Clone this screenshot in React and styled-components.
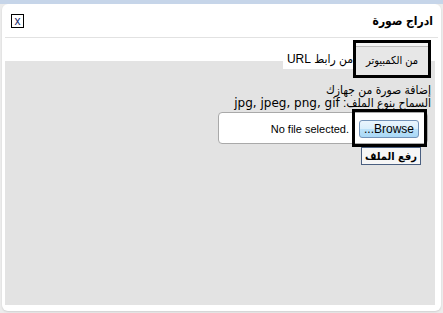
import React from 'react'
import styled, { createGlobalStyle } from 'styled-components'

const GlobalStyle = createGlobalStyle`
  html, body {
    margin: 0;
    padding: 0;
    background: #ececec;
  }
  body {
    font-family: "Liberation Sans", "DejaVu Sans Condensed", "DejaVu Sans", sans-serif;
    font-size: 12px;
    color: #000;
  }
`

const App = () => {
    return (
        <>
            <GlobalStyle />
            <Page>
                <Dialog>
                    <Header>
                        <Title>ادراج صورة</Title>
                        <Close>x</Close>
                    </Header>
                    <Body>
                        <Tabs>
                            <Tab $active>من الكمبيوتر</Tab>
                            <Tab>من رابط URL</Tab>
                        </Tabs>
                        <Panel>
                            <Line>إضافة صورة من جهازك</Line>
                            <Line>السماح بنوع الملف: <Ext>jpg, jpeg, png, gif</Ext></Line>
                            <FileBox>
                                <BrowseButton>Browse...</BrowseButton>
                                <FileName>No file selected.</FileName>
                                <Highlight />
                            </FileBox>
                            <UploadButton>رفع الملف</UploadButton>
                        </Panel>
                    </Body>
                </Dialog>
            </Page>
        </>
    )
}

export default App

const Page = styled.div`
    width: 443px;
    height: 313px;
    box-sizing: border-box;
    border-top: 4px solid #c6d5e9;
    padding-left: 2px;
    overflow: hidden;
`
const Dialog = styled.div`
    width: 439px;
    height: 307px;
    background: #fff;
    border-radius: 6px;
    box-shadow: 0 1px 2px rgba(0,0,0,0.12);
    display: flex;
    flex-direction: column;
`
const Header = styled.div`
    direction: rtl;
    height: 34px;
    box-sizing: border-box;
    display: flex;
    align-items: center;
    justify-content: space-between;
    padding: 0 5px 0 6px;
    margin: 0 3px;
    border-bottom: 1px solid #e2e2e2;
`
const Title = styled.div`
    font-family: "DejaVu Sans Condensed", "DejaVu Sans", sans-serif;
    font-weight: bold;
    font-size: 12px;
    margin-top: 1px;
`
const Close = styled.div`
    width: 13px;
    height: 14px;
    box-sizing: border-box;
    border: 1px solid #000;
    display: flex;
    align-items: center;
    justify-content: center;
    font-size: 12px;
    line-height: 1;
    color: #1a2a6a;
    margin-top: 1px;
`
const Body = styled.div`
    flex: 1;
    display: flex;
    flex-direction: column;
    padding: 2px 6px 6px 3px;
`
const Tabs = styled.div`
    direction: rtl;
    display: flex;
    align-items: flex-start;
    padding-right: 4px;
    margin-bottom: -17px;
    position: relative;
    z-index: 1;
`
const Tab = styled.div`
    white-space: nowrap;
    box-sizing: border-box;
    display: flex;
    align-items: center;
    justify-content: center;
    ${({ $active }) => $active ? `
        width: 78px;
        height: 38px;
        border: 3px solid #000;
        padding-top: 2px;
        font-size: 11px;
        background: linear-gradient(to bottom, #f4f4f4 0, #f4f4f4 3px, #bdbdbd 3px, #bdbdbd 4px, #e7e7e7 4px);
    ` : `
        width: 70px;
        height: 20px;
        margin-top: 9px;
        padding-left: 4px;
        background: #fff;
        font-size: 12px;
    `}
`
const Panel = styled.div`
    flex: 1;
    background: #e3e3e3;
    direction: rtl;
    padding: 23px 4px 0 0;
    display: flex;
    flex-direction: column;
    align-items: flex-start;
`
const Line = styled.div`
    font-size: 12px;
    line-height: 13px;
    white-space: nowrap;
`
const Ext = styled.span`
    font-family: "DejaVu Sans", sans-serif;
    font-size: 12px;
`
const FileBox = styled.div`
    position: relative;
    width: 210px;
    height: 32px;
    box-sizing: border-box;
    margin: 2px 3px 0 0;
    background: #fff;
    border: 1px solid #a9a9a9;
    border-radius: 4px;
    display: flex;
    align-items: center;
    padding-right: 8px;
    gap: 10px;
`
const BrowseButton = styled.div`
    width: 60px;
    height: 18px;
    box-sizing: border-box;
    border: 1px solid #7393b8;
    border-radius: 3px;
    background: linear-gradient(to bottom, #eaf5fd 0%, #d9effc 50%, #bde2f9 51%, #a9d8f6 100%);
    display: flex;
    align-items: center;
    justify-content: center;
    font-size: 12px;
    margin-top: 2px;
`
const FileName = styled.div`
    direction: ltr;
    font-size: 11px;
    margin-top: 2px;
`
const Highlight = styled.div`
    position: absolute;
    right: 0;
    top: -4px;
    width: 75px;
    height: 38px;
    box-sizing: border-box;
    border: 3px solid #000;
`
const UploadButton = styled.div`
    width: 60px;
    height: 18px;
    box-sizing: border-box;
    margin: 3px 10px 0 0;
    border: 1px solid #4a5f80;
    background: #f6f6f6;
    font-family: "DejaVu Sans Condensed", "DejaVu Sans", sans-serif;
    font-weight: bold;
    font-size: 11px;
    white-space: nowrap;
    display: flex;
    align-items: center;
    justify-content: center;
`
